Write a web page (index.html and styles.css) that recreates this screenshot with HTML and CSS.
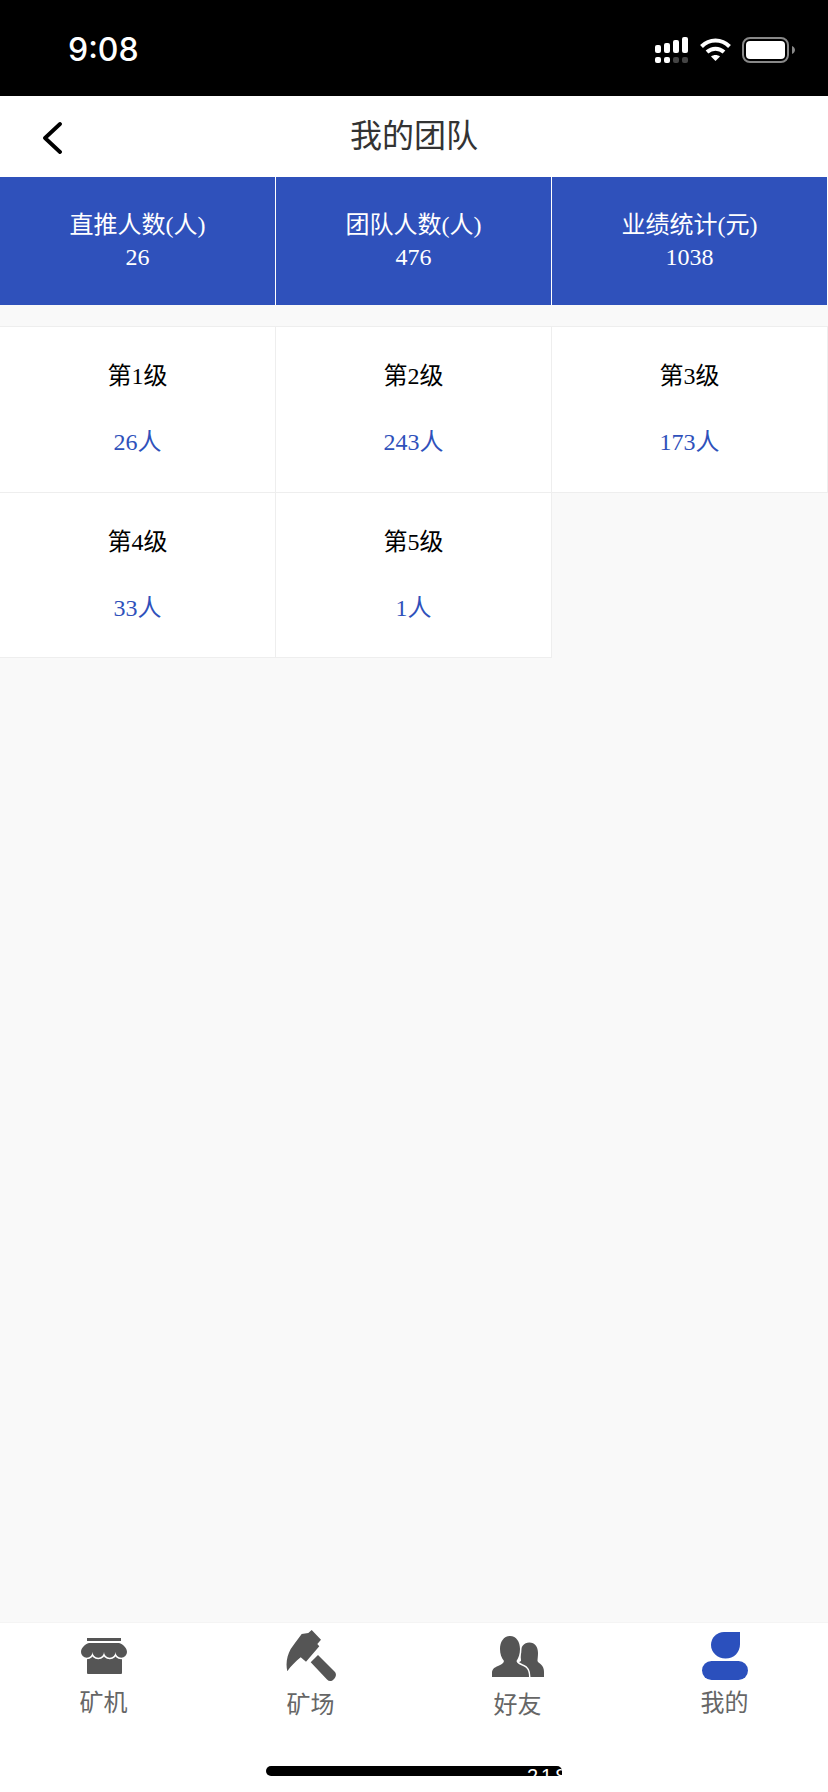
FILE: index.html
```html
<!DOCTYPE html>
<html lang="zh-CN">
<head>
    <meta charset="UTF-8">
    <meta name="viewport" content="width=device-width, initial-scale=1.0">
    <title>我的团队</title>
    <link rel="stylesheet" href="styles.css">
</head>
<body>
    <div class="status-bar">
        <span class="clock">9:08</span>
        <div class="status-icons">
            <svg class="icon-signal" width="33" height="26" viewBox="0 0 33 26" fill="#fff">
                <rect x="0" y="8" width="6" height="8" rx="2"/>
                <rect x="9" y="6" width="6" height="10" rx="2"/>
                <rect x="18" y="3" width="6" height="13" rx="2"/>
                <rect x="27" y="0" width="6" height="16" rx="2"/>
                <rect x="0" y="20" width="6" height="6" rx="2"/>
                <rect x="9" y="20" width="6" height="6" rx="2"/>
                <rect x="18" y="20" width="6" height="6" rx="2" fill="#444"/>
                <rect x="27" y="20" width="6" height="6" rx="2" fill="#444"/>
            </svg>
            <svg class="icon-wifi" width="31" height="23" viewBox="0 0 31 23" fill="none" stroke="#fff" stroke-width="4">
                <path d="M1.5 8.5C9.5 .5 21.5 .5 29.5 8.5"/>
                <path d="M7 14C12 9.5 19 9.5 24 14"/>
                <path d="M11 18.5L15.5 23L20 18.5C17.5 16.5 13.5 16.5 11 18.5Z" fill="#fff" stroke="none"/>
            </svg>
            <svg class="icon-battery" width="53" height="26" viewBox="0 0 53 26">
                <rect x="1" y="1" width="45" height="24" rx="7" fill="none" stroke="#888" stroke-width="2"/>
                <rect x="4" y="4" width="39" height="18" rx="4" fill="#fff"/>
                <path d="M50 9C52 10 53 11.500 53 13C53 14.500 52 16 50 17Z" fill="#888"/>
            </svg>
        </div>
    </div>

    <div class="nav-bar">
        <div class="nav-back">
            <svg width="20" height="32" viewBox="0 0 20 32" fill="none" stroke="#000" stroke-width="3.800" stroke-linecap="round" stroke-linejoin="round">
                <path d="M18 2L3 16L18 30"/>
            </svg>
        </div>
        <h1 class="nav-title">我的团队</h1>
    </div>

    <main class="content">
        <div class="summary">
            <div class="summary-cell">
                <p>直推人数(人)</p>
                <p>26</p>
            </div>
            <div class="summary-cell">
                <p>团队人数(人)</p>
                <p>476</p>
            </div>
            <div class="summary-cell">
                <p>业绩统计(元)</p>
                <p>1038</p>
            </div>
        </div>

        <div class="levels">
            <div class="level-cell">
                <p class="level-name">第1级</p>
                <p class="level-count">26人</p>
            </div>
            <div class="level-cell">
                <p class="level-name">第2级</p>
                <p class="level-count">243人</p>
            </div>
            <div class="level-cell">
                <p class="level-name">第3级</p>
                <p class="level-count">173人</p>
            </div>
            <div class="level-cell">
                <p class="level-name">第4级</p>
                <p class="level-count">33人</p>
            </div>
            <div class="level-cell">
                <p class="level-name">第5级</p>
                <p class="level-count">1人</p>
            </div>
        </div>
    </main>

    <footer class="tab-bar">
        <nav class="tabs">
            <div class="tab">
                <div class="tab-icon">
                    <svg width="46" height="36" viewBox="0 0 46 36" fill="#555">
                        <rect x="6" y="0" width="34" height="3"/>
                        <rect x="6" y="13" width="35" height="23" rx="1"/>
                        <path class="awning" d="M8 5H38C42 6 46 10 46 14A5.750 5.750 0 0 1 34.500 14A5.750 5.750 0 0 1 23 14A5.750 5.750 0 0 1 11.500 14A5.750 5.750 0 0 1 0 14C0 10 4 6 8 5Z"/>
                    </svg>
                </div>
                <span class="tab-label">矿机</span>
            </div>
            <div class="tab tab-low">
                <div class="tab-icon">
                    <svg width="50" height="52" viewBox="0 0 50 52" fill="#555">
                        <path d="M25.700 0L35 9.700L31.300 14L33.300 16.300L20 31.700L14.700 27.300C10 31 5 36 1.300 41.300C-.5 33 1 26 4.700 19L9 13L15.700 4L22.300 3Z"/>
                        <path d="M32 25L48.500 41.500C51 44 50 47.500 47.500 49.500C45.500 51.500 43 51.500 41 49.500L24.700 32.300Z"/>
                    </svg>
                </div>
                <span class="tab-label">矿场</span>
            </div>
            <div class="tab tab-low">
                <div class="tab-icon">
                    <svg width="52" height="41" viewBox="0 0 52 41" fill="#555">
                        <path d="M37.300 6.500C43 6.500 46 11 46 17C46 20 45.500 23 45.500 25C46 26.500 47.500 27 49 28.500C51 30 52 33 52 36V41H30L20 30L29 25C29 23 28.500 20 28.500 17C28.500 11 32 6.500 37.300 6.500Z"/>
                        <path class="person-front" d="M18 0C24.500 0 28 6 28 13C28 18 26.500 22 24.500 25C25 27.500 28 28.500 31 30C35 31.500 37 35 37 41H0V37C0 33 2.500 31.500 6 30C9 28.500 11.500 27.500 12 25C9.500 22 8 18 8 13C8 6 11.500 0 18 0Z"/>
                    </svg>
                </div>
                <span class="tab-label">好友</span>
            </div>
            <div class="tab tab-active">
                <div class="tab-icon">
                    <svg width="46" height="48" viewBox="0 0 46 48" fill="#2b50bd">
                        <path d="M22 0H38V12C38 20.500 32 26.500 23.500 26.500C15.500 26.500 9 20.500 9 13C9 5.500 15 0 22 0Z"/>
                        <rect x="0" y="29" width="46" height="19" rx="9.500"/>
                    </svg>
                </div>
                <span class="tab-label">我的</span>
            </div>
        </nav>
        <div class="home-bar"><span>218</span></div>
    </footer>
</body>
</html>
```

FILE: styles.css
```css
* {
    box-sizing: border-box;
}

body {
    display: flex;
    flex-direction: column;
    height: 100vh;
    margin: 0;
    overflow: hidden;
    background-color: #f9f9f9;
    font-family: "Liberation Serif", "Noto Sans CJK SC", serif;
}

p {
    margin: 0;
}

.status-bar {
    display: flex;
    justify-content: space-between;
    height: 96px;
    padding: 37px 33px 0 68px;
    background-color: #000;
}

.clock {
    color: #fff;
    font-family: Inter, "Liberation Sans", sans-serif;
    font-size: 32px;
    font-weight: 500;
    line-height: 26px;
}

.status-icons {
    display: flex;
    align-items: flex-start;
}

.icon-signal {
    margin-right: 12px;
}

.icon-wifi {
    margin-top: 1px;
    margin-right: 11px;
}

.nav-bar {
    display: grid;
    grid-template-columns: 80px 1fr 80px;
    align-items: center;
    height: 81px;
    background-color: #fff;
}

.nav-back {
    display: flex;
    padding: 3px 0 0 42px;
}

.nav-title {
    margin: 0 0 8px;
    color: #333;
    font-family: "Noto Sans CJK SC", sans-serif;
    font-size: 32px;
    font-weight: 400;
    line-height: 44px;
    text-align: center;
}

.content {
    flex: 1;
}

.summary {
    display: grid;
    grid-template-columns: repeat(3, 1fr);
    height: 128px;
    background-color: #2f51bb;
}

.summary-cell {
    display: flex;
    flex-direction: column;
    justify-content: center;
    border-right: 1px solid #fff;
    color: #fff;
    font-size: 24px;
    line-height: 32px;
    text-align: center;
}

.levels {
    display: grid;
    grid-template-columns: repeat(3, 1fr);
    margin-top: 21px;
    border-top: 1px solid #eee;
}

.level-cell {
    display: flex;
    flex-direction: column;
    align-items: center;
    gap: 32px;
    height: 165.500px;
    padding-top: 32px;
    border-right: 1px solid #eee;
    border-bottom: 1px solid #eee;
    background-color: #fff;
    font-size: 24px;
    line-height: 34px;
}

.level-name {
    color: #000;
}

.level-count {
    color: #2f51bb;
}

.tab-bar {
    display: flex;
    flex-direction: column;
    height: 170px;
    border-top: 1px solid #f4f4f4;
    background-color: #fff;
}

.tabs {
    display: grid;
    grid-template-columns: repeat(4, 1fr);
}

.tab {
    display: flex;
    flex-direction: column;
    align-items: center;
    padding-top: 3px;
}

.tab-icon {
    display: flex;
    align-items: center;
    justify-content: center;
    height: 60px;
}

.tab-label {
    color: #666;
    font-family: "Noto Sans CJK SC", sans-serif;
    font-size: 24px;
    line-height: 30px;
}

.tab-low .tab-label {
    margin-top: 2px;
}

.awning {
    stroke: #fff;
    stroke-width: 3;
    paint-order: stroke;
}

.person-front {
    stroke: #fff;
    stroke-width: 3;
    paint-order: stroke;
}

.home-bar {
    width: 296px;
    height: 10px;
    margin: auto auto 16px;
    padding-left: 261px;
    overflow: hidden;
    border-radius: 5px 5px 0 5px;
    background-color: #000;
    color: #fff;
    font-family: "Liberation Sans", sans-serif;
    font-size: 20px;
    letter-spacing: 3px;
    line-height: 20px;
    white-space: nowrap;
}
```
